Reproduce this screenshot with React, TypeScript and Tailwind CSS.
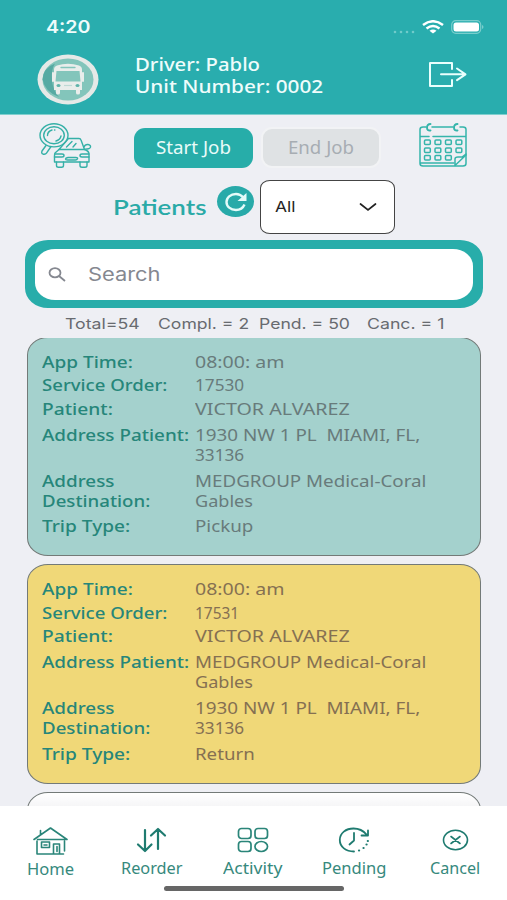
import { useLayoutEffect, useRef, useState } from "react";
import type { ReactNode } from "react";

/** A single line of text that is widened or narrowed to fill `w` pixels. */
function Fit({ w, className = "", children }: { w: number; className?: string; children: ReactNode }) {
  const ref = useRef<HTMLSpanElement>(null);
  const [scale, setScale] = useState(1);
  useLayoutEffect(() => {
    if (ref.current) setScale(w / ref.current.offsetWidth);
  }, [w]);
  return (
    <span className={"block shrink-0 text-left whitespace-pre " + className} style={{ width: w }}>
      <span ref={ref} className="inline-block origin-left" style={{ transform: `scaleX(${scale})` }}>
        {children}
      </span>
    </span>
  );
}

type Line = [string, number];
type Row = { label: Line[]; value: Line[]; h: string };

function JobCard({ rows, tone }: { rows: Row[]; tone: string }) {
  return (
    <article className={"h-[219.5px] w-[454px] shrink-0 rounded-[21px/18px] border-[1.4px] border-[#737a78] pt-[14px] pl-[13.6px] text-[16.5px] leading-[20.3px] " + tone}>
      {rows.map((r, i) => (
        <div key={i} className={"flex " + r.h}>
          <div className="w-[153px] shrink-0 font-medium text-[#26867a]">
            {r.label.map(([t, w]) => <Fit key={t} w={w}>{t}</Fit>)}
          </div>
          <div>
            {r.value.map(([t, w]) => <Fit key={t} w={w}>{t}</Fit>)}
          </div>
        </div>
      ))}
    </article>
  );
}

const home: Line[] = [["1930 NW 1 PL  MIAMI, FL,", 225], ["33136", 49]];
const clinic: Line[] = [["MEDGROUP Medical-Coral", 232], ["Gables", 58]];

function makeRows(order: Line, from: Line[], to: Line[], trip: Line): Row[] {
  return [
    { label: [["App Time:", 91]], value: [["08:00: am", 90]], h: "h-[23.5px]" },
    { label: [["Service Order:", 125]], value: [order], h: "h-[23.5px]" },
    { label: [["Patient:", 71]], value: [["VICTOR ALVAREZ", 155]], h: "h-[26px]" },
    { label: [["Address Patient:", 147.5]], value: from, h: "h-[46px]" },
    { label: [["Address", 72], ["Destination:", 108.5]], value: to, h: "h-[45.8px]" },
    { label: [["Trip Type:", 88]], value: [trip], h: "h-[20px]" },
  ];
}

function BusBadge() {
  return (
    <svg className="h-[51px] w-[62px]" viewBox="0 0 62 51">
      <ellipse cx="31" cy="25.5" rx="30.5" ry="25" fill="#e5e9e7" />
      <ellipse cx="31" cy="25.5" rx="25.5" ry="21" fill="#83c5bb" />
      <path d="M18 9.500q-4 6-3 17 1 10 7 16.500-14-5-16.500-17.500Q6 14 18 9.500Z" fill="#56aaa3" />
      <path d="M20 11.5q11-3.500 22 0 3 1 3 4v20.500h-2V39q0 1.500-2 1.500t-2-1.500v-3H23v3q0 1.500-2 1.500T19 39v-3h-2V15.500q0-3 3-4Z" fill="#e9edeb" />
      <path d="M24 13.500h14" stroke="#83c5bb" strokeWidth="1.300" strokeLinecap="round" />
      <path d="M19.500 17h23l1 10.500h-25Z" fill="#83c5bb" />
      <path d="M16 19v8M46 19v8" stroke="#e9edeb" strokeWidth="2" strokeLinecap="round" />
      <ellipse cx="21.500" cy="31.500" rx="2" ry="1.600" fill="#5fb3aa" />
      <ellipse cx="40.500" cy="31.500" rx="2" ry="1.600" fill="#5fb3aa" />
      <path d="M27 31.500h8" stroke="#bdd9d4" strokeWidth="1.200" />
    </svg>
  );
}

function FindCarIcon() {
  return (
    <svg className="h-[46px] w-[54px]" viewBox="0 0 54 46" fill="none" stroke="#35b0a7" strokeWidth="1.400" strokeLinejoin="round" strokeLinecap="round">
      <ellipse cx="15" cy="12.300" rx="14" ry="11.600" />
      <ellipse cx="15" cy="12.300" rx="10.300" ry="8.500" />
      <path d="M8.500 12.500q0-4 4.500-5.500M17 18q4-1 5-5M15.500 7h.4" />
      <path d="m7 22.500-4 5.500q-1 2.500 1.200 3.200 2.300.5 3.300-1l4.500-6.700" />
      <path d="M29.500 15.500H40q1.500 0 2 1.500l3.500 9.500H20L29 16M27.500 24l5.500-5.500M34 24l3-3.500" />
      <path d="M45 24q1-2.800 4-2.500 3 .5 2.500 2.700-.5 2-5.500 2M20 26.500l-4 3.500q-.5 1-.5 3v6H50v-8q0-3-4.500-4.500" />
      <path d="M16 31h7q2 0 2 1.500T23 34h-7.500M50 31h-7q-2 0-2 1.500t2 1.500h7M29 34.500h8q2 0 1.500 1.200T36.500 37h-8q-2 0-2-1t2.500-1.500Z" />
      <path d="M17.500 39v3.500q0 1.800 2 1.800h3q2 0 2-1.800V39M41 39v3.500q0 1.800 2 1.800h3q2 0 2-1.800V39" />
    </svg>
  );
}

function CalendarIcon() {
  return (
    <svg className="h-[44px] w-[48px]" viewBox="0 0 48 44" fill="none" stroke="#35b5ab" strokeWidth="1.500" strokeLinejoin="round" strokeLinecap="round">
      <path d="M7 4H4Q1 4 1 6.500v34Q1 43 4 43h40q3 0 3-2.500v-34Q47 4 44 4h-3M13 4h21M1 13.500h9M14 13.500h33M1 40h34" />
      <path d="M11.500 7.500Q8 8 8 4.500T11.500 1M38.500 7.500Q35 8 35 4.500T38.500 1" strokeWidth="1.900" />
      {[17, 25, 32.500].map((y, row) =>
        [5.500, 16, 26.500, 37].map((x, col) => (row === 2 && col === 3 ? null : <rect key={`${x}-${y}`} x={x} y={y} width="5.800" height="4.600" rx="1" />)),
      )}
      <path d="M36 42.500V36q0-2 3-2h4l4-3M36 42.500 47 32" />
    </svg>
  );
}

function HouseIcon() {
  return (
    <svg className="h-[28px] w-[35px]" viewBox="0 0 35 28" fill="none" stroke="#2a8579" strokeWidth="1.600" strokeLinejoin="round" strokeLinecap="round">
      <path d="M1 12.500 17.500 1 34 12.500H4.500M7.500 7.500V3.500M4 14v13h26.500M31.500 14v10M8.500 15h8v5.500h-8ZM20.500 26.500V17h6v9.500M24 19.500v5M11 18h3" />
    </svg>
  );
}

function ReorderIcon() {
  return (
    <svg className="h-[26px] w-[31px]" viewBox="0 0 31 26" fill="none" stroke="#1f7b70" strokeWidth="2.200" strokeLinejoin="round" strokeLinecap="round">
      <path d="M9 3v20M2 17.500 9 24l6.500-6.500M22 22V2M15 8.500 22 2l7 6.500" />
    </svg>
  );
}

function ActivityIcon() {
  return (
    <svg className="h-[26px] w-[32px]" viewBox="0 0 32 26" fill="none" stroke="#2a8579" strokeWidth="1.700">
      <rect x="1.500" y="1.500" width="12.500" height="10" rx="3" />
      <rect x="18" y="1.500" width="12.500" height="10" rx="3" />
      <rect x="1.500" y="14.500" width="12.500" height="10" rx="3" />
      <ellipse cx="24.250" cy="19.500" rx="6.300" ry="5" />
    </svg>
  );
}

function PendingIcon() {
  return (
    <svg className="h-[26px] w-[32px]" viewBox="0 0 32 26" fill="none" stroke="#1f7b70" strokeWidth="1.800" strokeLinecap="round" strokeLinejoin="round">
      <path d="M16 24.500C8 24.500 1.800 20 1.800 13S8 1.500 15.500 1.500q8 0 13 6M30 3.500v5h-6.500M16 6v7.500l-4.500 4" />
      <path d="M21 23.500h.1M25.500 21h.1M28.500 17.500h.1M29.800 14h.1" strokeWidth="2.200" />
    </svg>
  );
}

function CancelIcon() {
  return (
    <svg className="h-[22px] w-[27px]" viewBox="0 0 27 22" fill="none" stroke="#1f7b70" strokeWidth="1.600" strokeLinecap="round">
      <ellipse cx="13.500" cy="11" rx="12" ry="9.800" />
      <path d="m9 7.500 9 7M18 7.500l-9 7" />
    </svg>
  );
}

const tabs = [
  { name: "Home", w: 47, icon: <HouseIcon />, drop: "pt-[20.5px]" },
  { name: "Reorder", w: 62, icon: <ReorderIcon />, drop: "pt-[19px]" },
  { name: "Activity", w: 59, icon: <ActivityIcon />, drop: "pt-[19px]" },
  { name: "Pending", w: 64, icon: <PendingIcon />, drop: "pt-[19px]" },
  { name: "Cancel", w: 50, icon: <CancelIcon />, drop: "pt-[19px]" },
];

export default function App() {
  return (
    <div className="flex h-[900px] w-[507px] flex-col overflow-hidden bg-[#eeeff4] font-['Noto_Sans',sans-serif] text-[#6e7475]">
      <header className="h-[115px] shrink-0 border-b border-[#7fcfce] bg-[#29adae] text-[#effcfb]">
        <div className="flex h-[53px] items-center justify-between pt-[1px] pr-[23px] pl-[46px]">
          <Fit w={45} className="font-['Inter',sans-serif] text-[17px] leading-5 font-semibold">4:20</Fit>
          <div className="flex items-center">
            <svg className="mt-[9px] mr-[7px] h-1 w-[22px]" viewBox="0 0 22 4" fill="#70cbca">
              {[2, 8, 14, 20].map((x) => <circle key={x} cx={x} cy="2" r="1.300" />)}
            </svg>
            <svg className="mr-[7px] h-[14px] w-[22px]" viewBox="0 0 22 14" fill="none" stroke="#fff" strokeWidth="2.500">
              <path d="M1 5q10-7.500 20 0M4.500 8.500q6.500-5 13 0" />
              <path d="M7.500 10.800q3.500-2.600 7 0L11 13.500Z" fill="#fff" stroke="none" />
            </svg>
            <svg className="h-[14px] w-[33px]" viewBox="0 0 33 14">
              <rect x=".7" y=".7" width="29" height="12.600" rx="4" fill="none" stroke="#79cecd" strokeWidth="1.200" />
              <rect x="2.500" y="2.400" width="25.500" height="9.200" rx="2.500" fill="#fff" />
              <path d="M31 5v4q1.500-.5 1.500-2T31 5Z" fill="#79cecd" />
            </svg>
          </div>
        </div>
        <div className="flex">
          <div className="w-[134.5px] pt-[1px] pl-[37px]"><BusBadge /></div>
          <div className="text-[18.500px] leading-[22.300px] font-medium">
            <Fit w={125}>Driver: Pablo</Fit>
            <Fit w={188.500}>Unit Number: 0002</Fit>
          </div>
          <svg className="mt-[8px] ml-[104.500px] h-[27px] w-[39px]" viewBox="0 0 39 27" fill="none" stroke="#e9fffd" strokeWidth="2" strokeLinejoin="round" strokeLinecap="round">
            <path d="M24 8V2H2v23h22v-6M13 13.300h24M29 7.500l8.500 5.800-8.500 5.800" />
          </svg>
        </div>
      </header>

      <div className="flex h-[58px] shrink-0 pt-[8px] pl-[38.500px]">
        <FindCarIcon />
        <button className="mt-[4.500px] ml-[41.500px] flex h-10 w-[119px] items-center justify-center rounded-[11px] bg-[#27ada9] text-[17.500px] text-[#e9fbf9]">
          <Fit w={75}>Start Job</Fit>
        </button>
        <button className="mt-[4px] ml-[8px] flex h-[41px] w-[120px] items-center justify-center rounded-[11px] border-2 border-[#f2f3f5] bg-[#dfe2e4] text-[17.500px] text-[#a7adb3]">
          <Fit w={66}>End Job</Fit>
        </button>
        <div className="ml-[38px]"><CalendarIcon /></div>
      </div>

      <div className="flex h-[67px] shrink-0 pl-[113px]">
        <Fit w={94} className="mt-5 font-['Lato',sans-serif] text-[21.500px] leading-7 font-semibold text-[#2aaaa7]">Patients</Fit>
        <div className="mt-[13px] ml-[10px] flex h-[31px] w-[37px] items-center justify-center rounded-[50%] bg-[#28aaa9]">
          <svg className="h-[20px] w-[24px]" viewBox="0 0 24 20" fill="none" stroke="#e4fbf9" strokeWidth="2.400">
            <path d="M20.500 12.500C19 16 16 18 12 18 6.500 18 2.500 14.500 2.500 10S6.500 2 12 2q4 0 7.500 3.500" />
            <path d="M22.500 1v8h-9Z" fill="#e4fbf9" stroke="none" />
          </svg>
        </div>
        <div className="mt-[6.500px] ml-[6px] flex h-[54px] w-[135px] items-center justify-between rounded-[10px/8px] border-[1.400px] border-[#444] bg-white pr-[17px] pl-[14px] text-[#242424]">
          <Fit w={20.500} className="font-['Inter',sans-serif] text-[14.500px]">All</Fit>
          <svg className="h-[10px] w-[18px]" viewBox="0 0 18 10" fill="none" stroke="#222" strokeWidth="1.700" strokeLinecap="round">
            <path d="m1.500 2 7.500 6 7.500-6" />
          </svg>
        </div>
      </div>

      <div className="ml-[25px] flex h-[68px] w-[457.500px] shrink-0 items-center rounded-[23px/20px] border-x-[10px] border-y-[9px] border-[#28adaa] bg-[#28adaa]">
        <div className="flex h-[51px] w-full items-center rounded-[20px/17px] bg-white pl-[13px] text-[#858890]">
          <svg className="h-[15px] w-[18px]" viewBox="0 0 18 15" fill="none" stroke="#858890" strokeWidth="1.800">
            <ellipse cx="7" cy="5.700" rx="5.500" ry="4.600" />
            <path d="m11 9 6 5" />
          </svg>
          <Fit w={72} className="mt-[1px] ml-[22px] font-['Inter',sans-serif] text-[18.500px]">Search</Fit>
        </div>
      </div>

      <div className="flex h-[30px] shrink-0 items-center pt-[1.500px] pl-[64.500px] font-['Inter',sans-serif] text-[14.500px] leading-5 text-[#686b70]">
        <Fit w={74.500}>Total=54</Fit>
        <Fit w={91} className="ml-[18.500px]">Compl. = 2</Fit>
        <Fit w={91} className="ml-[10.500px]">Pend. = 50</Fit>
        <Fit w={77} className="ml-[16.500px]">Canc. = 1</Fit>
      </div>

      <main className="flex h-[467.500px] shrink-0 flex-col overflow-hidden pl-[27px]">
        <div className="-mt-[1.500px] flex flex-col gap-[8px]">
          <JobCard rows={makeRows(["17530", 49], home, clinic, ["Pickup", 58])} tone="bg-[#a4d1cd] text-[#687b7b]" />
          <JobCard rows={makeRows(["17531", 44], clinic, home, ["Return", 60])} tone="bg-[#f0d878] text-[#857052]" />
          <JobCard rows={[]} tone="bg-linear-to-b from-white from-0% to-[#e8e8ec] to-15%" />
        </div>
      </main>

      <footer className="flex h-[95px] shrink-0 flex-col bg-white text-[#36897d]">
        <nav className="flex h-[80px] items-start">
          {tabs.map((t) => (
            <button key={t.name} className={"flex w-[101.200px] flex-col items-center " + t.drop}>
              <span className="flex h-[30px] items-center">{t.icon}</span>
              <Fit w={t.w} className="mt-[3px] text-[15.500px] leading-5">{t.name}</Fit>
            </button>
          ))}
        </nav>
        <div className="ml-[164px] h-[5px] w-[180px] rounded-full bg-[#666]" />
      </footer>
    </div>
  );
}
